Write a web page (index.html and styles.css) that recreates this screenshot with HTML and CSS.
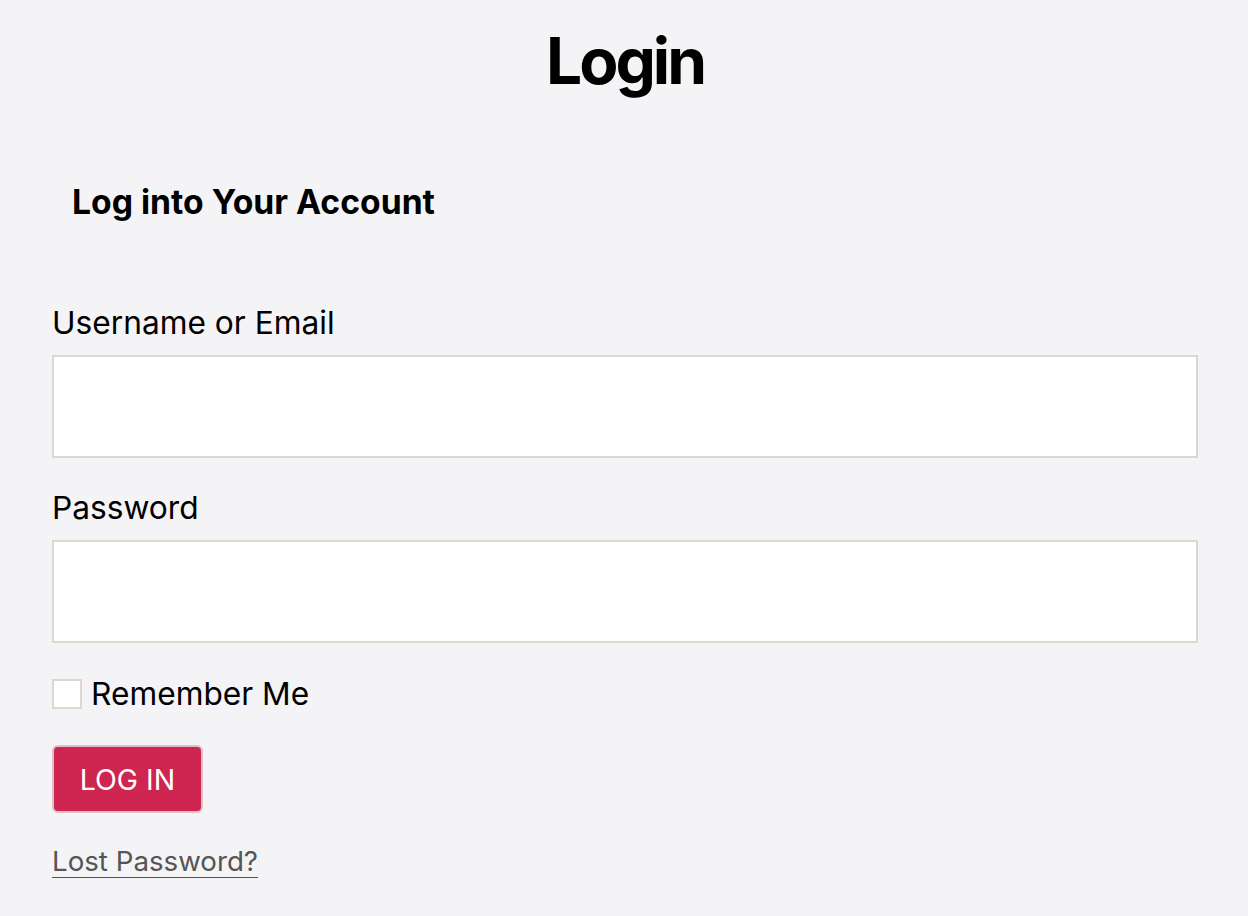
FILE: index.html
```html
<!DOCTYPE html>
<html lang="en">
<head>
  <meta charset="UTF-8" />
  <title>Login</title>
  <link rel="stylesheet" href="styles.css">
</head>
<body>
  <main class="page">
    <h1 class="page-title">Login</h1>

    <section class="login">
      <h2 class="login-heading">Log into Your Account</h2>

      <form class="login-form">
        <label class="field-label" for="user">Username or Email</label>
        <input class="field-input" id="user" type="text" />

        <label class="field-label" for="pass">Password</label>
        <input class="field-input" id="pass" type="password" />

        <label class="remember">
          <input class="remember-box" type="checkbox" />
          <span>Remember Me</span>
        </label>

        <button class="login-btn" type="button">LOG IN</button>

        <a class="lost-link" href="#">Lost Password?</a>
      </form>
    </section>
  </main>
</body>
</html>
```

FILE: styles.css
```css
html, body {
  margin: 0;
  padding: 0;
  background-color: #f4f4f6;
  font-family: "Inter", "Noto Sans", sans-serif;
  color: #000;
}

.page {
  padding: 0 50px 0 52px;
}

.page-title {
  margin: 0;
  padding-top: 22px;
  text-align: center;
  font-size: 64px;
  font-weight: 700;
  line-height: 78px;
  letter-spacing: -3px;
}

.login-heading {
  margin: 82px 0 0 20px;
  font-size: 33.7px;
  font-weight: 700;
  line-height: 40px;
}

.login-form {
  display: flex;
  flex-direction: column;
  align-items: flex-start;
  margin-top: 83px;
}

.field-label {
  font-size: 31.7px;
  line-height: 36px;
  margin-bottom: 14px;
}

.field-input {
  box-sizing: border-box;
  width: 100%;
  height: 103px;
  margin: 0 0 32px;
  border: 2px solid #dcd8ce;
  background: #fff;
  font-size: 28px;
  outline: none;
}

.remember {
  display: flex;
  align-items: center;
  gap: 9px;
  font-size: 31.7px;
  line-height: 36px;
  margin-top: 1px;
}

.remember-box {
  appearance: none;
  box-sizing: border-box;
  width: 30px;
  height: 30px;
  margin: 0;
  border: 2px solid #dcd8ce;
  background: #fff;
}

.login-btn {
  margin-top: 33px;
  width: 151px;
  height: 68px;
  border: 2px solid #dcc0c8;
  border-radius: 6px;
  background: #cf2551;
  color: #fff;
  font-family: inherit;
  font-size: 28.5px;
}

.lost-link {
  margin-top: 31px;
  color: #555;
  font-size: 27.7px;
  line-height: 34px;
  text-decoration-thickness: 2px;
  text-underline-offset: 6px;
}
```
